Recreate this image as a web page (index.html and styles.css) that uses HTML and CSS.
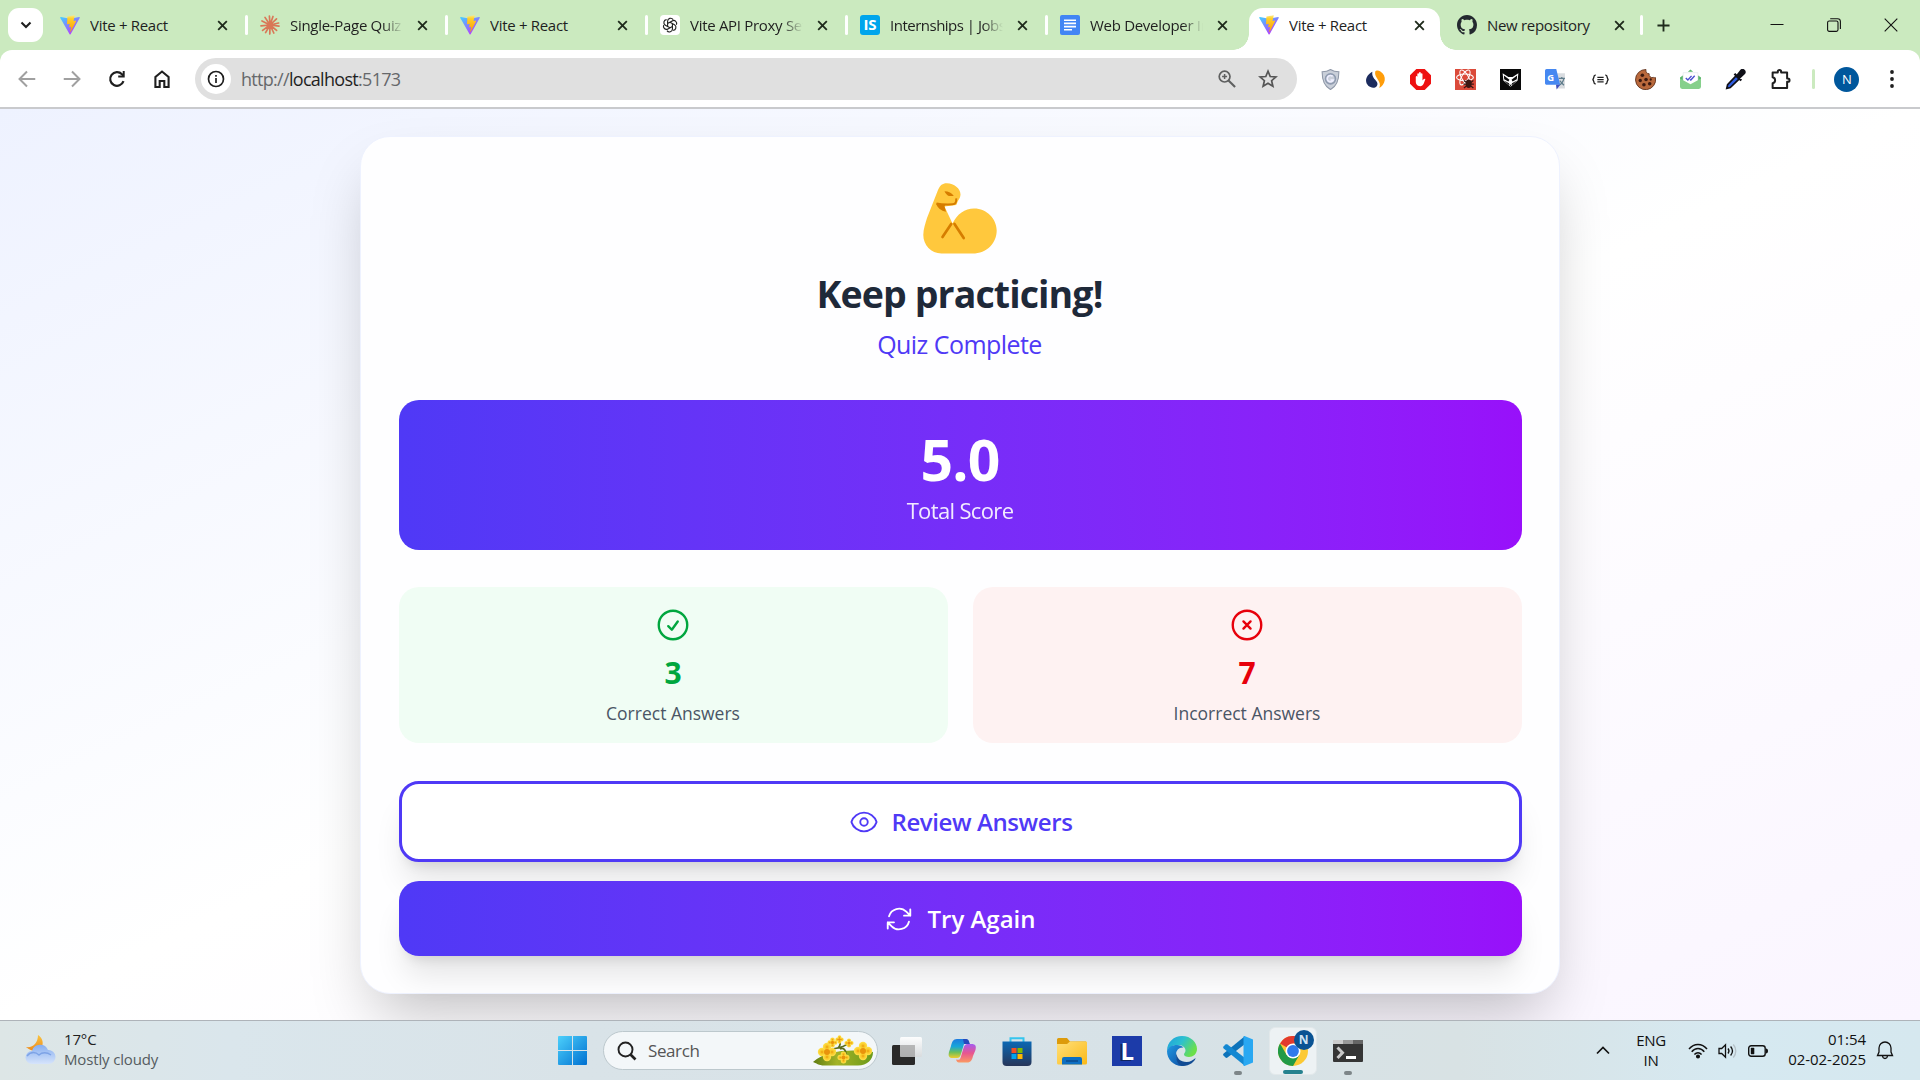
FILE: index.html
```html
<!DOCTYPE html>
<html lang="en">
<head>
<meta charset="utf-8">
<title>Vite + React</title>
<link rel="stylesheet" href="styles.css">
</head>
<body>
<svg class="defs" width="0" height="0" aria-hidden="true">
  <defs>
    <linearGradient id="va" x1="0" y1="0" x2=".7" y2="1"><stop offset="0" stop-color="#41d1ff"/><stop offset="1" stop-color="#bd34fe"/></linearGradient>
    <linearGradient id="vb" x1="0" y1="0" x2="0" y2="1"><stop offset="0" stop-color="#ffea83"/><stop offset=".2" stop-color="#ffd02a"/><stop offset="1" stop-color="#ff9a00"/></linearGradient>
    <linearGradient id="win" x1="0" y1="0" x2="1" y2="1"><stop offset="0" stop-color="#4cd0fb"/><stop offset="1" stop-color="#0070d1"/></linearGradient>
    <linearGradient id="cloud" x1="0" y1="0" x2="0" y2="1"><stop offset="0" stop-color="#86aef0"/><stop offset="1" stop-color="#d6e4fb"/></linearGradient>
    <linearGradient id="moon" x1="0" y1="0" x2="0" y2="1"><stop offset="0" stop-color="#f9c440"/><stop offset="1" stop-color="#ee8a1c"/></linearGradient>
    <linearGradient id="store" x1="0" y1="0" x2="0" y2="1"><stop offset="0" stop-color="#0b68b4"/><stop offset="1" stop-color="#273659"/></linearGradient>
    <linearGradient id="folder" x1="0" y1="0" x2="1" y2="1"><stop offset="0" stop-color="#ffe07a"/><stop offset="1" stop-color="#fbb917"/></linearGradient>
    <linearGradient id="edgeTop" x1="0" y1="0" x2="1" y2=".5"><stop offset="0" stop-color="#1f9fdc"/><stop offset=".5" stop-color="#2cc0d0"/><stop offset="1" stop-color="#6be04a"/></linearGradient>
    <linearGradient id="edgeLow" x1="0" y1="0" x2="1" y2="1"><stop offset="0" stop-color="#2199e2"/><stop offset="1" stop-color="#0c4aa0"/></linearGradient>
    <linearGradient id="copA" x1="0" y1="0" x2="0" y2="1"><stop offset="0" stop-color="#1c7be0"/><stop offset=".4" stop-color="#17a6d8"/><stop offset=".7" stop-color="#6cbf5b"/><stop offset="1" stop-color="#f1cd2d"/></linearGradient>
    <linearGradient id="copB" x1="0" y1="0" x2="0" y2="1"><stop offset="0" stop-color="#a55cf0"/><stop offset=".5" stop-color="#e8568f"/><stop offset="1" stop-color="#fb9a62"/></linearGradient>
    <linearGradient id="leaf" x1="0" y1="0" x2="1" y2="0"><stop offset="0" stop-color="#5f7d12"/><stop offset=".4" stop-color="#a3b326"/><stop offset="1" stop-color="#6b9a1b"/></linearGradient>
    <radialGradient id="petal"><stop offset="0" stop-color="#ec9a0b"/><stop offset=".4" stop-color="#f8c726"/><stop offset="1" stop-color="#ffe14c"/></radialGradient>
    <linearGradient id="tv" x1="0" y1="0" x2="0" y2="1"><stop offset="0" stop-color="#fff"/><stop offset="1" stop-color="#d8dbdd"/></linearGradient>
  </defs>
  <symbol id="vite" viewBox="0 0 20 20"><path fill="url(#va)" d="M19.7 2.9 10.6 19.3c-.2.4-.8.4-1 0L.3 2.9c-.2-.4.1-.9.6-.8l9.2 1.6 9-1.6c.5-.1.8.4.6.8z"/><path fill="url(#vb)" d="M14.4.3 7.7 1.6c-.2 0-.3.2-.3.3l-.4 7c0 .3.2.4.4.4l1.9-.4c.2-.1.4.1.4.3l-.6 2.8c0 .2.2.4.4.3l1.2-.4c.2 0 .4.2.4.4l-.9 4.3c0 .3.3.4.5.2l5.5-10.8c.1-.2-.1-.4-.4-.4l-1.900.4c-.2 0-.3-.1-.3-.3L14.7.7c.1-.3-.1-.5-.3-.4z"/></symbol>
  <symbol id="x" viewBox="0 0 12 12"><path d="M1.3 1.3l9.4 9.4M10.7 1.3l-9.4 9.4" stroke="#1f2b1c" stroke-width="2" fill="none"/></symbol>
  <symbol id="flower" viewBox="-10 -10 20 20"><g fill="url(#petal)"><circle cy="-5" r="4.2"/><circle cx="5" r="4.2"/><circle cy="5" r="4.2"/><circle cx="-5" r="4.2"/></g><circle r="3" fill="#e8930c"/></symbol>
</svg>

<header class="browser">
  <div class="tabstrip">
    <button class="tab-search"><svg width="12" height="8" viewBox="0 0 12 8"><path d="M1.5 1.5 6 6l4.5-4.5" fill="none" stroke="#1f1f1f" stroke-width="2.1"/></svg></button>
    <div class="tab"><svg class="fav"><use href="#vite"/></svg><span class="tab-title">Vite + React</span><svg class="tab-x"><use href="#x"/></svg></div>
    <div class="tab"><svg class="fav" viewBox="0 0 20 20"><g stroke="#d97757" stroke-width="1.7" stroke-linecap="round"><path d="M10 10 9.4 1M10 10 13 1.5M10 10l6.5-6.2M10 10l8.6-2M10 10l9 1.2M10 10l6.6 5.4M10 10l3.8 8M10 10l-.2 9M10 10l-4.4 7.6M10 10l-7.4 5.4M10 10l-9 .8M10 10 2 6M10 10 5 2.4"/></g></svg><span class="tab-title fade">Single-Page Quiz App</span><svg class="tab-x"><use href="#x"/></svg></div>
    <div class="tab"><svg class="fav"><use href="#vite"/></svg><span class="tab-title">Vite + React</span><svg class="tab-x"><use href="#x"/></svg></div>
    <div class="tab"><svg class="fav" viewBox="0 0 20 20"><rect width="20" height="20" rx="4" fill="#fff"/><g fill="none" stroke="#222" stroke-width="1.15"><g id="knot"><path d="M7.6 11.4V6.2a3 3 0 0 1 5.5-1.6M7.6 8.6l4.6-2.7a3 3 0 0 1 4.2 3.9"/></g><use href="#knot" transform="rotate(120 10 10)"/><use href="#knot" transform="rotate(240 10 10)"/></g></svg><span class="tab-title fade">Vite API Proxy Setup</span><svg class="tab-x"><use href="#x"/></svg></div>
    <div class="tab"><span class="fav fav-is">IS</span><span class="tab-title fade tight">Internships | Jobs in</span><svg class="tab-x"><use href="#x"/></svg></div>
    <div class="tab"><svg class="fav" viewBox="0 0 20 20"><rect width="20" height="20" rx="2" fill="#4285f4"/><path d="M4 5.2h12M4 8.4h12M4 11.6h12M4 14.8h8" stroke="#fff" stroke-width="1.6"/></svg><span class="tab-title fade">Web Developer Intern</span><svg class="tab-x"><use href="#x"/></svg></div>
    <div class="tab active"><svg class="fav"><use href="#vite"/></svg><span class="tab-title">Vite + React</span><svg class="tab-x"><use href="#x"/></svg></div>
    <div class="tab last"><svg class="fav" viewBox="0 0 16 16"><path fill="#24292f" d="M8 0C3.58 0 0 3.58 0 8c0 3.54 2.29 6.53 5.47 7.59.4.07.55-.17.55-.38 0-.19-.01-.82-.01-1.49-2.01.37-2.53-.49-2.69-.94-.09-.23-.48-.94-.82-1.13-.28-.15-.68-.52-.01-.53.63-.01 1.08.58 1.23.82.72 1.21 1.87.87 2.33.66.07-.52.28-.87.51-1.07-1.78-.2-3.64-.89-3.64-3.95 0-.87.31-1.59.82-2.15-.08-.2-.36-1.02.08-2.12 0 0 .67-.21 2.2.82.64-.18 1.32-.27 2-.27s1.36.09 2 .27c1.53-1.04 2.2-.82 2.2-.82.44 1.1.16 1.92.08 2.12.51.56.82 1.27.82 2.15 0 3.07-1.87 3.75-3.65 3.95.29.25.54.73.54 1.48 0 1.07-.01 1.93-.01 2.2 0 .21.15.46.55.38A8.01 8.01 0 0 0 16 8c0-4.42-3.58-8-8-8z"/></svg><span class="tab-title">New repository</span><svg class="tab-x"><use href="#x"/></svg></div>
    <svg class="new-tab" viewBox="0 0 14 14"><path d="M7 .5v13M.5 7h13" stroke="#1f2b1c" stroke-width="2"/></svg>
    <div class="window-controls">
      <svg width="14" height="14" viewBox="0 0 14 14"><path d="M.5 6.5h13" stroke="#111"/></svg>
      <svg width="14" height="14" viewBox="0 0 14 14" fill="none" stroke="#111" stroke-width="1.1"><rect x=".6" y="3" width="10.4" height="10.4" rx="1.6"/><path d="M3.2 .7h7.4a2.8 2.8 0 0 1 2.8 2.8V11"/></svg>
      <svg width="14" height="14" viewBox="0 0 14 14"><path d="M.7.7l12.6 12.6M13.3.7.7 13.3" stroke="#111" stroke-width="1.1"/></svg>
    </div>
  </div>
  <div class="toolbar">
    <div class="nav">
      <svg viewBox="0 0 20 20"><path d="M17.5 10H3.5M10 3.2 3.2 10l6.8 6.8" fill="none" stroke="#a0a0a0" stroke-width="1.8"/></svg>
      <svg viewBox="0 0 20 20"><path d="M2.5 10h14M10 3.2l6.8 6.8-6.8 6.8" fill="none" stroke="#a0a0a0" stroke-width="1.8"/></svg>
      <svg viewBox="0 0 20 20"><path d="M15.900 12a6.200 6.200 0 1 1-1.400-6.300l1.300 1.300" fill="none" stroke="#1f1f1f" stroke-width="2"/><path d="M17 2.700v5.900h-5.900V6.800h4.100V2.700z" fill="#1f1f1f"/></svg>
      <svg viewBox="0 0 20 20"><path d="M4 17.300V8.200L10 3.200l6 5v9.100h-3.900v-5.500H7.900v5.500z" fill="none" stroke="#1f1f1f" stroke-width="1.900"/></svg>
    </div>
    <div class="omnibox">
      <span class="site-info"><svg width="18" height="18" viewBox="0 0 18 18"><circle cx="9" cy="9" r="7.5" fill="none" stroke="#1f1f1f" stroke-width="1.7"/><path d="M9 8v5M9 5v1.800" stroke="#1f1f1f" stroke-width="1.7"/></svg></span>
      <span class="url">http://<b>localhost</b>:5173</span>
      <svg class="zoom" width="20" height="20" viewBox="0 0 20 20" fill="none" stroke="#5f6060"><circle cx="7.6" cy="7.6" r="5.4" stroke-width="1.7"/><path d="m11.5 11.5 6.6 6.6" stroke-width="2.1"/><path d="M7.6 5.1v5M5.1 7.6h5" stroke-width="1.5"/></svg>
      <svg width="22" height="22" viewBox="0 0 22 22"><path d="m11 3.200 2.200 5.300 5.700.5-4.300 3.700 1.300 5.600-4.900-3-4.900 3 1.300-5.600L3.100 9l5.700-.5z" fill="none" stroke="#555" stroke-width="1.7"/></svg>
    </div>
    <div class="extensions">
      <svg viewBox="0 0 20 20"><path d="M10 .5c2.500 1.700 5 2.200 8 2.200C18 11 16 16.500 10 19.600 4 16.500 2 11 2 2.700c3 0 5.500-.5 8-2.200z" fill="#c9cfd9" stroke="#8f98a8"/><circle cx="10" cy="9.400" r="4.700" fill="none" stroke="#8f9bb0" stroke-width="1.600"/><path d="M12 7a3 3 0 1 0 .6 3.500H10" fill="none" stroke="#eef" stroke-width="1.500"/></svg>
      <svg viewBox="0 0 20 20"><path d="M7 2.500C3.500 4.500 1 7.500 1 11c0 4 3.500 6.800 6.800 6.800 2.700 0 4.400-1.900 4-4.300C11.200 10.300 6 8.500 7 2.500z" fill="#1c2c5e"/><path d="M9.700 2.500c1-1.500 3.300-1.200 5-.2 3 1.800 4.600 5 4.100 8.300-.5 3.400-2.800 5.900-5.200 7.400C16.500 11.500 8.500 8.500 9.700 2.500z" fill="#ff9d0a"/></svg>
      <svg viewBox="0 0 20 20"><path d="M6 0h8l6 6v8l-6 6H6l-6-6V6z" fill="#ee1111"/><path d="M5.500 7.500c0-1 1.500-1 1.500 0V10V4.800c0-1.100 1.600-1.100 1.600 0V9.300 3.800c0-1.100 1.700-1.100 1.700 0V9.300 4.800c0-1.100 1.600-1.100 1.600 0V11c1-1.500 2-2.300 2.700-1.500-.9 2.800-1.800 6.900-4.800 6.900-3.300 0-4.300-2.400-4.300-4.400z" fill="#fff"/></svg>
      <svg viewBox="0 0 20 20"><rect width="20" height="20" fill="#db4a3a"/><g fill="none" stroke="#fff" stroke-width="1"><ellipse cx="9.500" cy="8" rx="8" ry="3.200"/><ellipse cx="9.500" cy="8" rx="8" ry="3.200" transform="rotate(60 9.500 8)"/><ellipse cx="9.500" cy="8" rx="8" ry="3.200" transform="rotate(120 9.500 8)"/></g><ellipse cx="13" cy="14" rx="2.800" ry="4" fill="#3b1713"/><path d="m8.500 11 9 7M17.500 11l-9 7M8 14.500h10" stroke="#3b1713" stroke-width="1.200"/></svg>
      <svg viewBox="0 0 20 20"><rect width="20" height="20" fill="#090909"/><path d="m2.500 4 5.500 3.500h4L17.500 4l-.7 7-6.800 6-6.800-6z" fill="#fff"/><path d="m3.700 6.300 5.300 4-1 1.700-4-2.200zM16.300 6.300l-5.300 4 1 1.700 4-2.200zM4 11l4.500 2.500L10 17l1.500-3.500L16 11l-4 4h-4z" fill="#090909"/></svg>
      <svg viewBox="0 0 20 20"><path d="M9 4h10v14.500H11z" fill="#d9dce0"/><path d="M13 9h6M16 7.500V9m2 0c-.6 3-2 5-4.500 6.500M14 11l4 4.500" stroke="#607d8b" fill="none" stroke-width="1.200"/><path d="M1.500 0h9.200l3.800 15H1.500C.7 15 0 14.300 0 13.500v-12C0 .7.7 0 1.500 0z" fill="#4688f1"/><path d="M10.500 15h4l-3.400 4.500z" fill="#3f4fc0"/><text x="2.200" y="11.500" class="g">G</text></svg>
      <svg viewBox="0 0 20 20"><path d="M5.500 5.800H5c-2.300 0-.5 4.200-2.800 4.200 2.300 0 .5 4.200 2.800 4.200h.5M14.500 5.800h.5c2.300 0 .5 4.200 2.800 4.200-2.300 0-.5 4.200-2.800 4.200h-.5M7 8h6M7 10.100h6M7 12.200h6" fill="none" stroke="#222" stroke-width="1.300"/></svg>
      <svg viewBox="0 0 20 20"><path d="M10.500.5a3 3 0 0 0 3 4 3 3 0 0 0 4 3.500c.7.300 1.500.300 2 .2A9.600 9.600 0 1 1 10.500.5z" fill="#b9693c" stroke="#5b2c17" stroke-width=".8"/><g fill="#3c1a10"><circle cx="7" cy="6" r="1.700"/><circle cx="5" cy="11" r="1.600"/><circle cx="10.500" cy="10" r="1.700"/><circle cx="8.500" cy="15" r="1.700"/><circle cx="14" cy="14" r="1.700"/><circle cx="15" cy="10" r="1.100"/></g></svg>
      <svg viewBox="0 0 20 20"><path d="M7.500 2.500 10 .5l2.500 2z" fill="#58b46b"/><path d="m0 8 3-2v6l7 2 7-2V6l3 2v4H0z" fill="#58b46b"/><path d="M3 3.500h14v9l-7 3-7-3z" fill="#fff" stroke="#e3e6ea" stroke-width=".6"/><path d="m0 9 10 5.500L20 9v8a2 2 0 0 1-2 2H2a2 2 0 0 1-2-2z" fill="#86d08c"/><path d="m5.500 8.500 2 2 3.500-4M9.500 10l.8.500 3.700-4" fill="none" stroke="#4a4fd0" stroke-width="1.300"/></svg>
      <svg viewBox="0 0 20 20"><path d="M10.500 6.500 2.500 15l-.8 3.500 3.300-.8L13.500 9.500z" fill="#2e5ce0" stroke="#101018" stroke-width="1.600"/><path d="m9 4.500 6.500 6.500M12 6l3.500-4.500c1.500-1.500 4 .8 2.700 2.500L14 8z" fill="#101018" stroke="#101018" stroke-width="2.200"/></svg>
      <svg viewBox="0 0 20 20"><path d="M2.500 3.300h4.900V2.600a1.600 1.600 0 0 1 3.200 0v.7h5.700V9h.7a1.600 1.600 0 0 1 0 3.200h-.7v5.900H2.500v-4.500a2.900 2.900 0 0 0 0-5.700z" fill="none" stroke="#1f1f1f" stroke-width="1.900" stroke-linejoin="round"/></svg>
    </div>
    <i class="ext-sep"></i>
    <span class="avatar">N</span>
    <svg class="dots" width="6" height="18" viewBox="0 0 6 18"><g fill="#1f1f1f"><circle cx="3" cy="2" r="1.900"/><circle cx="3" cy="9" r="1.900"/><circle cx="3" cy="16" r="1.900"/></g></svg>
  </div>
</header>

<main class="page">
  <section class="card">
    <svg class="emoji" viewBox="0 0 74 71"><path fill="#ffc83d" d="M15 7C17 2 20 0 24 .2c7 .3 13.500 5 13.500 11.300 0 2.500-1.300 4.700-2.600 6.600l-1.700 3.800-11.700 1.500 8 17.100C34 31 42 25.500 51 25.500 64 25.500 73.700 36 73.700 47.500 73.700 60 64 70.500 49.500 70.500H18.500C8 70.500.3 62 .3 52 .3 46 2.500 40 4 35z"/><path d="M13.500 20.500c5 1 11 1 16 .8 3 0 4-2.300 3.700-6" fill="none" stroke="#d67d00" stroke-width="2"/><path d="M13 20.500l9.500 1.800-1 1 1.500 5.500c-5-1-8.500-4-10-8.300zM21.500 8.200c4 0 7.500 2 9.300 4.800h-5c-1.800-1-3.500-2.600-4.300-4.800z" fill="#d67d00"/><path d="M28.200 41 19.500 54M31.500 41 40.700 55" stroke="#d67d00" stroke-width="2.700" stroke-linecap="round"/></svg>
    <h1>Keep practicing!</h1>
    <p class="subtitle">Quiz Complete</p>
    <div class="score"><strong>5.0</strong><span>Total Score</span></div>
    <div class="stats">
      <div class="stat good">
        <svg viewBox="0 0 24 24" class="stat-icon"><path d="M9 12.750 11.250 15 15 9.750M21 12a9 9 0 1 1-18 0 9 9 0 0 1 18 0Z"/></svg>
        <strong>3</strong><span>Correct Answers</span>
      </div>
      <div class="stat bad">
        <svg viewBox="0 0 24 24" class="stat-icon"><path d="m9.750 9.750 4.500 4.500m0-4.500-4.500 4.500M21 12a9 9 0 1 1-18 0 9 9 0 0 1 18 0Z"/></svg>
        <strong>7</strong><span>Incorrect Answers</span>
      </div>
    </div>
    <button class="btn outline"><svg viewBox="0 0 24 24"><path d="M2.036 12.322a1.012 1.012 0 0 1 0-.639C3.423 7.510 7.360 4.500 12 4.500c4.638 0 8.573 3.007 9.963 7.178.070.207.070.431 0 .639C20.577 16.490 16.640 19.500 12 19.500c-4.638 0-8.573-3.007-9.963-7.178Z"/><path d="M15 12a3 3 0 1 1-6 0 3 3 0 0 1 6 0Z"/></svg><span>Review Answers</span></button>
    <button class="btn solid"><svg viewBox="0 0 24 24"><path d="M16.023 9.348h4.992v-.001M2.985 19.644v-4.992m0 0h4.992m-4.993 0 3.181 3.183a8.250 8.250 0 0 0 13.803-3.700M4.031 9.865a8.250 8.250 0 0 1 13.803-3.700l3.181 3.182m0-4.991v4.990"/></svg><span>Try Again</span></button>
  </section>
</main>

<footer class="taskbar">
  <div class="weather">
    <svg width="31" height="31" viewBox="0 0 31 31"><path d="M13 1c5 3 6 9 3 13s-9 4-15-1c7 1 12-4 12-12z" fill="url(#moon)"/><path d="M7 30a6.500 6.500 0 0 1 0-13 8.500 8.500 0 0 1 16-1 7 7 0 0 1 1 14z" fill="url(#cloud)"/><path d="M2 22c4-5 9-4 12-1 3-3 8-3 12 0" fill="none" stroke="#7da3e6" stroke-width="1.300"/></svg>
    <div><span class="temp">17°C</span><span class="sky">Mostly cloudy</span></div>
  </div>
  <div class="apps">
    <svg class="start" width="29" height="29" viewBox="0 0 29 29" fill="url(#win)"><path d="M1 0h13v14H0V1a1 1 0 0 1 1-1zM15 0h13a1 1 0 0 1 1 1v13H15zM0 15h14v14H1a1 1 0 0 1-1-1zM15 15h14v13a1 1 0 0 1-1 1H15z"/></svg>
    <div class="search">
      <svg width="20" height="20" viewBox="0 0 20 20" fill="none" stroke="#222" stroke-width="1.900"><circle cx="8.500" cy="8.500" r="7"/><path d="m13.500 13.500 5 5" stroke-width="2.600"/></svg>
      <span>Search</span>
      <svg class="blossom" width="62" height="32" viewBox="0 0 62 32"><path d="M1 27C15 15 38 14 61 17c0 8-6 13.500-15 13.500H12C7 30.500 4 28 1 27z" fill="url(#leaf)"/><path d="M20 14c5-1 12-1 16-6M28 14c4-2 6 2 6 5M27 5c2 3 1 6-1 8" fill="none" stroke="#5c6d1c" stroke-width="1.700"/><use href="#flower" x="5" y="7" width="20" height="20"/><use href="#flower" x="41" y="6" width="20" height="20"/><use href="#flower" x="25" y="16" width="13" height="13"/><use href="#flower" x="15" y="2" width="11" height="11"/><use href="#flower" x="23" y="0" width="9" height="9"/><use href="#flower" x="32" y="3" width="10" height="10"/></svg>
    </div>
    <div class="app"><svg viewBox="0 0 30 30"><rect y="9" width="23" height="20" rx="1.500" fill="#292929"/><rect x="8" y="1" width="22" height="20" rx="1.500" fill="url(#tv)" opacity=".93"/><path d="M8 9h15v12H8z" fill="#999" opacity=".6"/></svg></div>
    <div class="app"><svg viewBox="0 0 30 30"><path d="M18 3h-8C6 3 5 6 4 10L2 16c-1 4 0 6 4 6h4c2 0 3-1 4-4l3-10c.7-2 2-2 5-1-.5-2-1-4-4-4z" fill="url(#copA)"/><path d="M12 26.500h8c4 0 5-2.500 6-6.500l2.500-6c1-4 0-6-4-6h-4c-2 0-3 1-4 4l-3 10c-.7 2-2 2-4.500 1.500.5 1.500 1 3 3 3z" fill="url(#copB)"/><path d="M16 3h3c3 0 3 3 4 5h-6z" fill="#2549bd"/></svg></div>
    <div class="app"><svg viewBox="0 0 30 30"><path d="M8.500 6.500V2.200h13v4.300" fill="none" stroke="#35c5ee" stroke-width="2"/><path d="M.5 5.500h29V26a4 4 0 0 1-4 4h-21a4 4 0 0 1-4-4z" fill="url(#store)"/><path d="M9.500 12h5v5h-5z" fill="#f25022"/><path d="M15.500 12h5v5h-5z" fill="#7fba00"/><path d="M9.500 18h5v5h-5z" fill="#00a4ef"/><path d="M15.500 18h5v5h-5z" fill="#ffb900"/></svg></div>
    <div class="app"><svg viewBox="0 0 30 30"><path d="M1.500 2H10l3 3.500h16V12H0V3.500A1.500 1.500 0 0 1 1.500 2z" fill="#dd9b0b"/><path d="M13 5.500h16a1 1 0 0 1 1 1V27a1.500 1.500 0 0 1-1.500 1.500h-27A1.500 1.500 0 0 1 0 27V8h10z" fill="url(#folder)"/><path d="M5 28.500V23a2 2 0 0 1 2-2h16a2 2 0 0 1 2 2v5.500z" fill="#0d6fc2"/><path d="M9 25h12" stroke="#0a4a8c" stroke-width="1.500"/></svg></div>
    <div class="app"><span class="l-app">L</span></div>
    <div class="app"><svg viewBox="0 0 30 30"><path d="M0 15C0 6 7 0 15 0c9 0 15 6.500 15 13 0 5-4 8-8 8-3 0-5-1-5-2.500s1.500-1.800 1.500-4C18.500 11 15 9 11 9 5 9 1 12 0 15z" fill="url(#edgeTop)"/><path d="M0 15C1 11 5 9 10 9c3 0 5 1 6.500 2.500C12 11 9 14.500 9 18.500 9 25 14 30 19 29.500 8 32 0 24 0 15z" fill="url(#edgeLow)"/><path d="M9.500 17c0 5 4 9 10 9 4 0 6.500-1.700 9-4 0 3-6 8-12.500 8C11 29.500 8 23.500 9.500 17z" fill="#114b93"/></svg></div>
    <div class="app"><svg viewBox="0 0 30 30"><path d="M22 0v8L4.500 21.500c-.7.500-1.400.5-2 0L.7 19.800c-.8-.8-.8-1.500 0-2.200z" fill="#0d73ba"/><path d="M22 30v-8L4.500 8.500c-.7-.5-1.400-.5-2 0L.7 10.200c-.8.8-.8 1.500 0 2.200z" fill="#1488d2"/><path d="M21.500 0 30 3.600v22.800L21.500 30c-1 0-1-.2-1-1V1c0-.8 0-1 1-1z" fill="#29a8f2"/></svg><i class="run"></i></div>
    <div class="app current"><svg viewBox="0 0 30 30"><circle cx="15" cy="15" r="15" fill="#fcc934"/><path d="M15 15 2 7.500A15 15 0 0 1 28 7.500H15z" fill="#e33b2e"/><path d="M2 7.500A15 15 0 0 0 15 30l6.500-11.300L8.500 18.700z" fill="#229a46"/><circle cx="15" cy="15" r="7.500" fill="#fff"/><circle cx="15" cy="15" r="5.900" fill="#3079ec"/></svg><b class="badge">N</b><i class="run on"></i></div>
    <div class="app"><svg viewBox="0 0 30 30"><path d="M1 4h28a1 1 0 0 1 1 1v20a1 1 0 0 1-1 1H1a1 1 0 0 1-1-1V5a1 1 0 0 1 1-1z" fill="#353535"/><path d="M0 4h10v4H0z" fill="#ccc"/><path d="M10 4h10v4H10z" fill="#999"/><path d="M20 4h10v4H20z" fill="#666"/><path d="m4.500 11.500 5 5.200-5 5.300" fill="none" stroke="#c9c9c9" stroke-width="3"/><path d="M13 21.500h10" stroke="#fff" stroke-width="3"/></svg><i class="run"></i></div>
  </div>
  <div class="tray">
    <svg class="chev" width="14" height="9" viewBox="0 0 14 9"><path d="m1 7.500 6-6 6 6" fill="none" stroke="#111" stroke-width="1.700"/></svg>
    <span class="lang">ENG<br>IN</span>
    <svg class="wifi" width="20" height="16" viewBox="0 0 20 16" fill="none" stroke="#111" stroke-width="1.500"><path d="M1 6c5-6 13-6 18 0M3.700 8.800c3.500-4.300 9.100-4.300 12.600 0M6.400 11.500c2.200-2.500 5-2.500 7.200 0"/><circle cx="10" cy="13.500" r="1.300" fill="#111"/></svg>
    <svg class="vol" width="20" height="16" viewBox="0 0 20 16" fill="none" stroke="#111" stroke-width="1.300"><path d="M1 5.500h2.700L7.500 1.700v12.600L3.700 10.500H1z"/><path d="M10 5.500c1.200 1.500 1.200 3.500 0 5M12.600 3.500c2.300 2.700 2.300 6.300 0 9"/><path d="M15.300 1.500c3.300 3.800 3.300 9.200 0 13" stroke="#b5c0c7"/></svg>
    <svg class="bat" width="20" height="12" viewBox="0 0 20 12"><rect x=".7" y=".7" width="16.500" height="10.600" rx="2.500" fill="none" stroke="#111" stroke-width="1.400"/><rect x="2.800" y="2.800" width="3.500" height="6.400" rx=".6" fill="#111"/><path d="M18 3.500c1.300 0 2 1 2 2.500s-.7 2.500-2 2.500z" fill="#111"/></svg>
    <span class="clock">01:54<br>02-02-2025</span>
    <svg class="bell" width="18" height="19" viewBox="0 0 18 19" fill="none" stroke="#111" stroke-width="1.300"><path d="M1.500 14.500 3 11V7a6 6 0 0 1 12 0v4l1.500 3.500zM6.500 15c.5 3.300 4.500 3.300 5 0"/></svg>
  </div>
</footer>
</body>
</html>
```
FILE: styles.css
```css
* { box-sizing: border-box; }
body {
  margin: 0;
  width: 1920px;
  height: 1080px;
  overflow: hidden;
  display: flex;
  flex-direction: column;
  font-family: "Open Sans", "Noto Sans", sans-serif;
  color: #1f1f1f;
}
button { font: inherit; border: 0; padding: 0; }
svg { display: block; flex: none; }
.defs { position: absolute; }

/* browser chrome */
.browser { flex: none; height: 109px; background: #cbeabf; }
.tabstrip { display: flex; height: 50px; align-items: center; padding-left: 8px; }
.tab-search {
  width: 35px; height: 34px; margin-right: 3px; border-radius: 11px; background: #fff;
  display: flex; align-items: center; justify-content: center; flex: none;
}
.tab {
  flex: none; width: 200px; height: 50px; padding: 0 18px 0 14px;
  display: flex; align-items: center; position: relative;
}
.tab::after { content: ""; position: absolute; right: -2px; top: 15px; width: 3px; height: 20px; border-radius: 2px; background: #fff; }
.tab.last::after { right: 0; }
.fav { width: 20px; height: 20px; flex: none; }
.fav-is { background: #00a5ec; border-radius: 3px; color: #fff; font-weight: 700; font-size: 15px; line-height: 19px; text-align: center; }
.tab-title { width: 113px; margin-left: 10px; overflow: hidden; white-space: nowrap; font-size: 15px; letter-spacing: -.3px; }
.tab-title.tight { letter-spacing: -.5px; }
.fade { -webkit-mask-image: linear-gradient(90deg, #000 82%, transparent); mask-image: linear-gradient(90deg, #000 82%, transparent); }
.tab-x { width: 11px; height: 11px; margin-left: auto; }
.tab:nth-of-type(6)::after, .tab.active::after { display: none; }
.tab.active {
  width: 191px; height: 42px; margin: 8px 3px 0; padding: 0 15px 8px 10px;
  background: #fff; border-radius: 14px 14px 0 0;
}
.tab.active::before {
  content: ""; position: absolute; left: -16px; right: -16px; bottom: 0; height: 16px;
  background:
    radial-gradient(circle at 0 0, transparent 15.5px, #fff 16px) left / 16px 16px no-repeat,
    radial-gradient(circle at 100% 0, transparent 15.5px, #fff 16px) right / 16px 16px no-repeat;
}
.new-tab { width: 13px; height: 13px; margin-left: 14px; }
.window-controls { margin-left: auto; padding-right: 22px; display: flex; gap: 43px; }
.toolbar {
  height: 59px; background: #fff; border-radius: 12px 12px 0 0; border-bottom: 2px solid #c9cacd;
  display: flex; align-items: center; padding: 1px 25px 0 16px;
}
.nav { display: flex; gap: 23px; width: 179px; }
.nav svg { width: 22px; height: 22px; }
.omnibox {
  width: 1102px; height: 42px; border-radius: 21px; background: #e0e0e0;
  display: flex; align-items: center; padding: 0 18px 0 6px;
}
.site-info { width: 30px; height: 30px; border-radius: 50%; background: #fff; display: flex; align-items: center; justify-content: center; }
.url { margin-left: 10px; font-size: 18px; letter-spacing: -.7px; color: #66686b; }
.url b { font-weight: 400; color: #1f1f1f; }
.zoom { margin-left: auto; margin-right: 20px; }
.extensions { display: flex; gap: 24.050px; margin-left: 23px; }
.extensions svg { width: 21px; height: 21px; }
.g { font: 700 9px "Open Sans", sans-serif; fill: #fff; }
.ext-sep { width: 3px; height: 20px; margin-left: 21px; background: #cbeabf; border-radius: 2px; }
.avatar {
  width: 25px; height: 25px; margin-left: 19px; border-radius: 50%; background: #00579c; color: #fff;
  font-size: 13px; line-height: 25px; text-align: center;
}
.dots { margin-left: auto; }

/* quiz result */
.page {
  flex: none; height: 911px; overflow: hidden; display: flex; justify-content: center; padding-top: 27px;
  background: linear-gradient(to bottom right, #eef2ff, #fff 50%, #faf5ff);
}
.card {
  width: 1200px; height: 858px; padding: 46px 37px 37px 38px; border: 1px solid #eef2ff; border-radius: 30px;
  background: #fefeff;
  box-shadow: 0 31px 62px -15px rgba(0, 0, 0, .25);
  display: flex; flex-direction: column; align-items: center;
}
.emoji { width: 74px; height: 71px; margin-right: 2px; }
h1 { margin: 15px 2px 0 0; font-size: 37.5px; line-height: 50px; font-weight: 700; letter-spacing: -.9px; color: #1e2939; }
.subtitle { margin: 5px 2px 1px 0; font-size: 25px; line-height: 40px; letter-spacing: -.55px; color: #4f39f6; }
.score {
  width: 100%; height: 150px; margin-top: 35px; padding: 29px 1px 0 0; border-radius: 20px; flex: none;
  background: linear-gradient(90deg in oklab, #4f39f6, #9810fa); color: #fff;
  display: flex; flex-direction: column; align-items: center;
}
.score strong { font-size: 57px; line-height: 60px; letter-spacing: -.8px; }
.score span { font-size: 22px; line-height: 40px; margin-top: 1px; letter-spacing: -.65px; opacity: .9; }
.stats { width: 100%; display: grid; grid-template-columns: 1fr 1fr; gap: 25px; margin-top: 37px; }
.stat { height: 156px; padding: 19px 1px 0 0; border-radius: 20px; display: flex; flex-direction: column; align-items: center; }
.good { background: #f0fdf4; color: #00a63e; }
.bad { background: #fef2f2; color: #e7000b; }
.stat-icon { width: 38px; height: 38px; fill: none; stroke: currentColor; stroke-width: 1.5; stroke-linecap: round; stroke-linejoin: round; }
.stat strong { font-size: 30px; line-height: 40px; margin-top: 9px; }
.stat span { font-size: 17.5px; line-height: 28px; margin-top: 6px; color: #4a5565; }
.btn {
  width: 100%; flex: none; border-radius: 20px; display: flex; align-items: center; justify-content: center; gap: 13px;
  font-size: 24px; font-weight: 600; letter-spacing: -.4px;
  box-shadow: 0 25px 31px -6px rgba(0, 0, 0, .1), 0 10px 12px -7px rgba(0, 0, 0, .1);
}
.btn svg { width: 30px; height: 30px; fill: none; stroke: currentColor; stroke-width: 1.5; stroke-linecap: round; stroke-linejoin: round; }
.outline { height: 81px; margin-top: 38px; border: 3px solid #4f39f6; background: #fff; color: #4f39f6; }
.solid { height: 75px; margin-top: 19px; background: linear-gradient(90deg in oklab, #4f39f6, #9810fa); color: #fff; letter-spacing: 0; padding-right: 1px; }

/* taskbar */
.taskbar {
  flex: none; height: 60px; border-top: 1px solid #aeb3b9;
  background: linear-gradient(90deg, #dde6e6, #dae6ec 12%, #d9e3e8 30%, #d7e2e7 60%, #d8e2e4 76%, #d6e9f1 90%, #d6e8ef);
  display: flex; align-items: center;
}
.weather { display: flex; gap: 8px; margin-left: 25px; width: 533px; align-items: center; font-size: 15px; line-height: 20px; }
.weather > svg { margin-top: -2px; }
.weather > div { margin-top: -4px; letter-spacing: -.15px; }
.weather span { display: block; }
.sky { color: #555c60; }
.apps { display: flex; align-items: center; height: 59px; }
.search {
  width: 275px; height: 39px; margin: 0 5px 0 16px; border-radius: 20px; background: #f3f7f9; border: 1px solid #bcc8cd;
  display: flex; align-items: center; padding: 0 3px 0 13px; font-size: 17px; letter-spacing: -.4px; color: #555;
}
.search span { margin-left: 11px; }
.blossom { margin-left: auto; }
.app { width: 48px; height: 48px; margin-right: 7.1px; display: flex; align-items: center; justify-content: center; position: relative; }
.app > svg { width: 30px; height: 30px; }
.current { background: #edf2f4; border-radius: 6px; border: 1px solid #e2e8ea; }
.run { position: absolute; bottom: 0; left: 20px; width: 8px; height: 4px; border-radius: 2px; background: #7d8588; }
.run.on { width: 20px; left: 13px; background: #26828f; }
.badge { position: absolute; left: 24px; top: 2px; width: 20px; height: 20px; border-radius: 50%; background: #0a5393; color: #cfe3f3; font-size: 12px; line-height: 20px; text-align: center; }
.l-app { width: 30px; height: 30px; background: #1c3ba9; color: #fff; font-weight: 700; font-size: 24px; line-height: 29px; text-align: center; text-shadow: -2px 1px #10245e; }
.tray { margin-left: auto; display: flex; align-items: center; padding-right: 26px; font-size: 15px; line-height: 20px; color: #111; }
.lang { width: 40px; margin: -2px 17px 0 21px; text-align: center; letter-spacing: -.3px; }
.vol { margin-left: 10px; }
.bat { margin-left: 10px; }
.clock { width: 90px; margin: -4px 0 0 8px; text-align: right; letter-spacing: -.05px; }
.bell { margin-left: 10px; }
```
